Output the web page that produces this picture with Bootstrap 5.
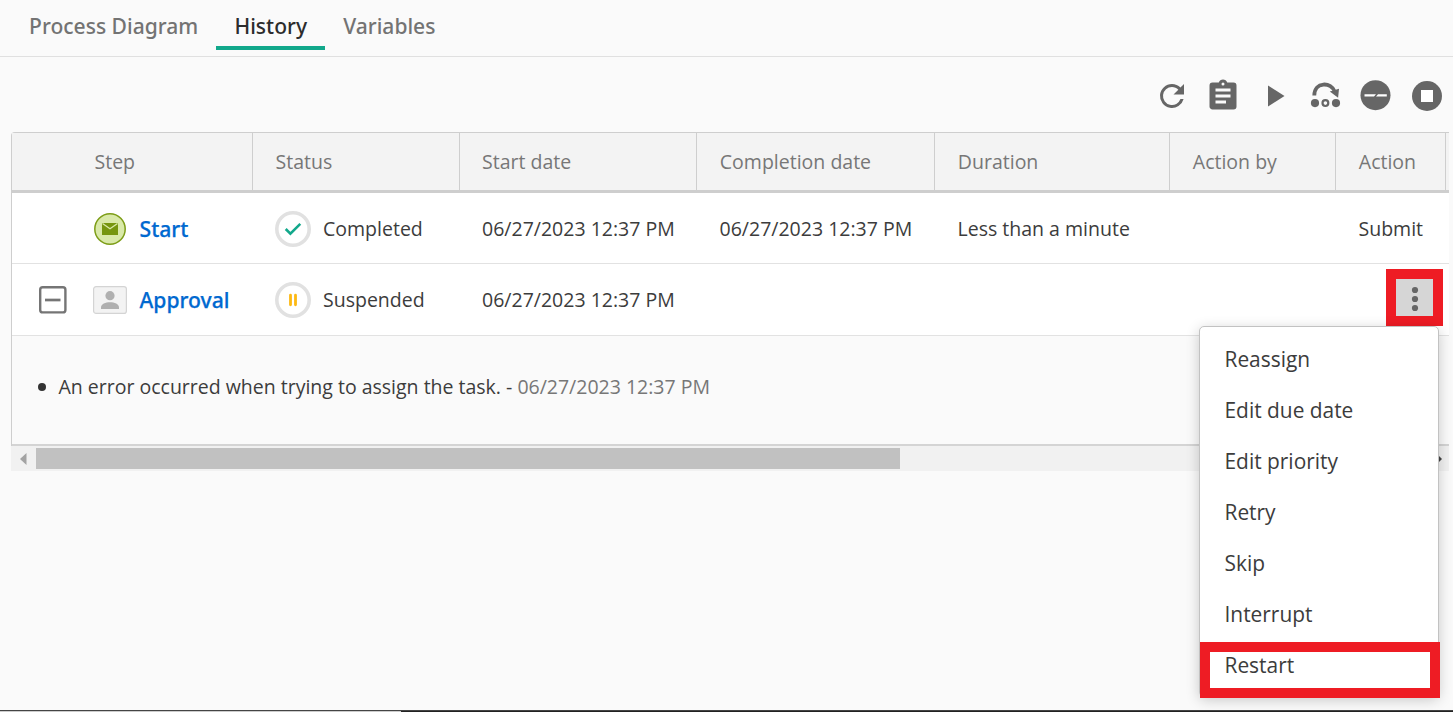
<!DOCTYPE html>
<html lang="en">
<head>
<meta charset="utf-8">
<title>Process history</title>
<link rel="stylesheet" href="https://cdn.jsdelivr.net/npm/bootstrap@5.3.0/dist/css/bootstrap.min.css">
<style>
body{font-family:"Open Sans",sans-serif;font-size:19.52px;line-height:27px;color:#3c3c3c;background:#fafafa}
.tabbar{height:57px;border-bottom:1px solid #e0e0e0;padding-left:11px}
.tabbar .nav-link{height:50px;padding:12px 18.100px 0;font-family:"Noto Sans","Open Sans",sans-serif;font-size:21.050px;font-weight:500;color:#737373;border-bottom:4px solid transparent}
.tabbar .nav-link.active{color:#2c2c2c;border-color:#12a88b}
.tools{height:75px;padding:21px 8px 0 0;gap:15px;color:#666}
.tools svg{width:36px;height:36px;display:block}
.hist-wrap{width:1438px;margin-left:11px}
.hist{width:1438px;table-layout:fixed;border-collapse:separate;border-spacing:0;border:solid #cecece;border-width:1px 0 0 1px;border-top-left-radius:4px}
.hist th{height:60px;background:#f3f3f3;font-weight:400;color:#777;border-right:1px solid #cecece;border-bottom:3px solid #cecece;padding:0 0 0 22.800px}
.hist th:last-child{border-right:0}
.hist th:first-child{padding-left:82.500px}
.hist td{height:71px;background:#fff;border-bottom:1px solid #e2e2e2;padding:0 0 0 22.500px;white-space:nowrap}
.hist td.statcell{padding-left:22px}
.hist tr.r1 svg{margin-top:2px}
.hist tr.r2 td{height:72px}
.hist .stepcell{padding-left:27px}
.hist tr.note td{height:110px;background:#fafafa;border-bottom:2px solid #d4d4d4;padding:0 0 7px 46.500px;line-height:27px;letter-spacing:-.01px}
.dot{width:8px;height:8px;margin-left:-21px;margin-right:13px;background:#333;flex:none}
.steplink{color:#0069d0;font-family:"Noto Sans","Open Sans",sans-serif;font-size:21.150px;font-weight:500;-webkit-text-stroke:.25px currentColor;text-decoration:none;padding-left:.5px}
.kebab{width:57px;height:57px;border:10px solid #ee1c24;background:#d6d6d6;margin-right:3px}
.actmenu{position:absolute;z-index:5;left:-137px;top:62px;width:240px;height:371px;background:#fff;border:1px solid #c2c2c2;border-radius:5px;padding:7px 0 0;font-size:20.900px;box-shadow:0 3px 14px rgba(0,0,0,.2)}
.actmenu li{height:51px;line-height:51px;padding-left:24.500px}
.actmenu li.picked{width:240px;height:56px;border:10px solid #ee1c24;margin-top:2px;padding-left:14.500px;line-height:26px}
.sbar{height:25px;background:#f1f1f1;padding:2px 6px 2px 9px}
.sthumb{width:864px;height:21px;background:#c1c1c1;margin-left:9px}
.edge{height:2px;background:#222;border-top:1px solid #444}
.edge div{width:401px;height:1px;background:#ccc}
</style>
<script src="https://cdn.jsdelivr.net/npm/bootstrap@5.3.0/dist/js/bootstrap.bundle.min.js"></script>
</head>
<body class="d-flex flex-column vh-100 overflow-hidden">
<ul class="nav tabbar flex-nowrap align-items-start">
  <li class="nav-item"><a class="nav-link">Process Diagram</a></li>
  <li class="nav-item"><a class="nav-link active">History</a></li>
  <li class="nav-item"><a class="nav-link">Variables</a></li>
</ul>
<div class="tools d-flex justify-content-end">
  <svg viewBox="0 0 24 24" fill="currentColor"><path d="M17.65 6.35A7.96 7.96 0 0 0 12 4a8 8 0 1 0 7.73 10h-2.08A6 6 0 1 1 12 6c1.66 0 3.14.69 4.22 1.78L13 11h7V4z"/></svg>
  <svg viewBox="0 0 24 24" fill="currentColor"><path d="M19 3h-4.18C14.4 1.84 13.3 1 12 1s-2.4.84-2.82 2H5a2 2 0 0 0-2 2v14c0 1.1.9 2 2 2h14a2 2 0 0 0 2-2V5a2 2 0 0 0-2-2zm-7 0a1 1 0 1 1 0 2 1 1 0 0 1 0-2zm2 14H7v-2h7zm3-4H7v-2h10zm0-4H7V7h10z"/></svg>
  <svg viewBox="0 0 24 24" fill="currentColor"><path d="M8 5v14l11-7z"/></svg>
  <svg viewBox="0 0 36 36" fill="currentColor"><path d="M7.300 17.500C7.300 3.500 24.500 3.500 28 14" fill="none" stroke="currentColor" stroke-width="3.800"/><path d="M22.800 13.500 32 10.800l-.9 8.900z"/><circle cx="8" cy="25.100" r="4.100"/><circle cx="18.400" cy="25.100" r="2.900" fill="none" stroke="currentColor" stroke-width="2.200"/><circle cx="29" cy="25.100" r="4.100"/></svg>
  <svg viewBox="0 0 36 36" fill="currentColor"><circle cx="17.5" cy="17.2" r="15"/><path d="M6.500 16.200h11.500l-2 2.400h-9.500zM20 16.200h8.800v2.400H18z" fill="#fff"/></svg>
  <svg viewBox="0 0 36 36" fill="currentColor"><circle cx="18" cy="18" r="15"/><path d="M12 12h12v12H12z" fill="#fff"/></svg>
</div>
<div class="hist-wrap">
<table class="hist">
  <colgroup><col style="width:241px"><col style="width:207px"><col style="width:237px"><col style="width:238px"><col style="width:235px"><col style="width:166px"><col style="width:110px"><col></colgroup>
  <thead><tr><th>Step</th><th style="padding-left:22.500px">Status</th><th style="padding-left:22px">Start date</th><th>Completion date</th><th>Duration</th><th>Action by</th><th>Action</th><th></th></tr></thead>
  <tbody>
  <tr class="r1">
    <td class="stepcell"><div class="d-flex align-items-center"><svg class="flex-shrink-0" style="margin-left:55px;margin-right:13px" width="32" height="32" viewBox="0 0 32 32"><circle cx="16" cy="16" r="15.2" fill="#d9e9a9" stroke="#7d9d17" stroke-width="1.5"/><path d="M8 10h16v12H8z" fill="#76960f"/><path d="m8.5 10.5 7.500 5.200 7.500-5.200" fill="none" stroke="#d9e9a9" stroke-width="1.300"/></svg><a class="steplink">Start</a></div></td>
    <td class="statcell"><div class="d-flex align-items-center"><svg class="flex-shrink-0" style="margin-right:12px" width="36" height="36" viewBox="0 0 36 36"><circle cx="18" cy="18" r="16.200" fill="#fff" stroke="#e1e1e1" stroke-width="3.600"/><path d="m10.700 18 4.700 4.600 9.900-9.700" fill="none" stroke="#12a88b" stroke-width="2.600"/></svg>Completed</div></td>
    <td style="padding-left:22px">06/27/2023 12:37 PM</td><td>06/27/2023 12:37 PM</td><td>Less than a minute</td><td></td><td>Submit</td><td></td>
  </tr>
  <tr class="r2">
    <td class="stepcell"><div class="d-flex align-items-center"><svg class="flex-shrink-0" width="28" height="28" viewBox="0 0 28 28"><rect x="1.200" y="1.200" width="25.200" height="25.200" rx="2.500" fill="none" stroke="#757575" stroke-width="2.400"/><path d="M6 14h15.500" stroke="#757575" stroke-width="2.700"/></svg><svg class="flex-shrink-0" style="margin-left:26px;margin-right:12px" width="34" height="28" viewBox="0 0 34 28"><rect x=".6" y=".6" width="32.800" height="26.800" rx="2.500" fill="#f3f3f3" stroke="#d4d4d4" stroke-width="1.200"/><circle cx="17" cy="9.700" r="4.600" fill="#b0b0b0"/><path d="M8 23v-1.500c0-7 18-7 18 0V23z" fill="#b0b0b0"/></svg><a class="steplink">Approval</a></div></td>
    <td class="statcell"><div class="d-flex align-items-center"><svg class="flex-shrink-0" style="margin-right:12px" width="36" height="36" viewBox="0 0 36 36"><circle cx="18" cy="18" r="16.200" fill="#fff" stroke="#e1e1e1" stroke-width="3.600"/><path d="M15.500 13.200v9.600M20.500 13.200v9.600" stroke="#fdb913" stroke-width="2.800" stroke-linecap="round"/></svg>Suspended</div></td>
    <td style="padding-left:22px">06/27/2023 12:37 PM</td><td></td><td></td><td></td>
    <td class="position-relative align-top p-0"><div style="padding-top:5px" class="d-flex justify-content-end"><div class="kebab"><svg class="d-block" width="37" height="37" fill="#666"><circle cx="19" cy="11" r="3.100"/><circle cx="19" cy="20" r="3.100"/><circle cx="19" cy="29" r="3.100"/></svg></div></div>
      <ul class="actmenu list-unstyled m-0"><li>Reassign</li><li>Edit due date</li><li>Edit priority</li><li>Retry</li><li>Skip</li><li>Interrupt</li><li class="picked">Restart</li></ul></td><td></td>
  </tr>
  <tr class="note"><td colspan="8"><div class="d-flex align-items-center"><i class="dot rounded-circle"></i><div>An error occurred when trying to assign the task. - <span style="color:#777">06/27/2023 12:37 PM</span></div></div></td></tr>
  </tbody>
</table>
<div class="sbar d-flex align-items-center"><svg width="7" height="12"><path d="M6.500 0v12L0 6z" fill="#a3a3a3"/></svg><div class="sthumb"></div><svg class="ms-auto" width="7" height="12"><path d="M0 0v12l6-6z" fill="#444"/></svg></div>
</div>
<div class="edge mt-auto"><div></div></div>
</body>
</html>
